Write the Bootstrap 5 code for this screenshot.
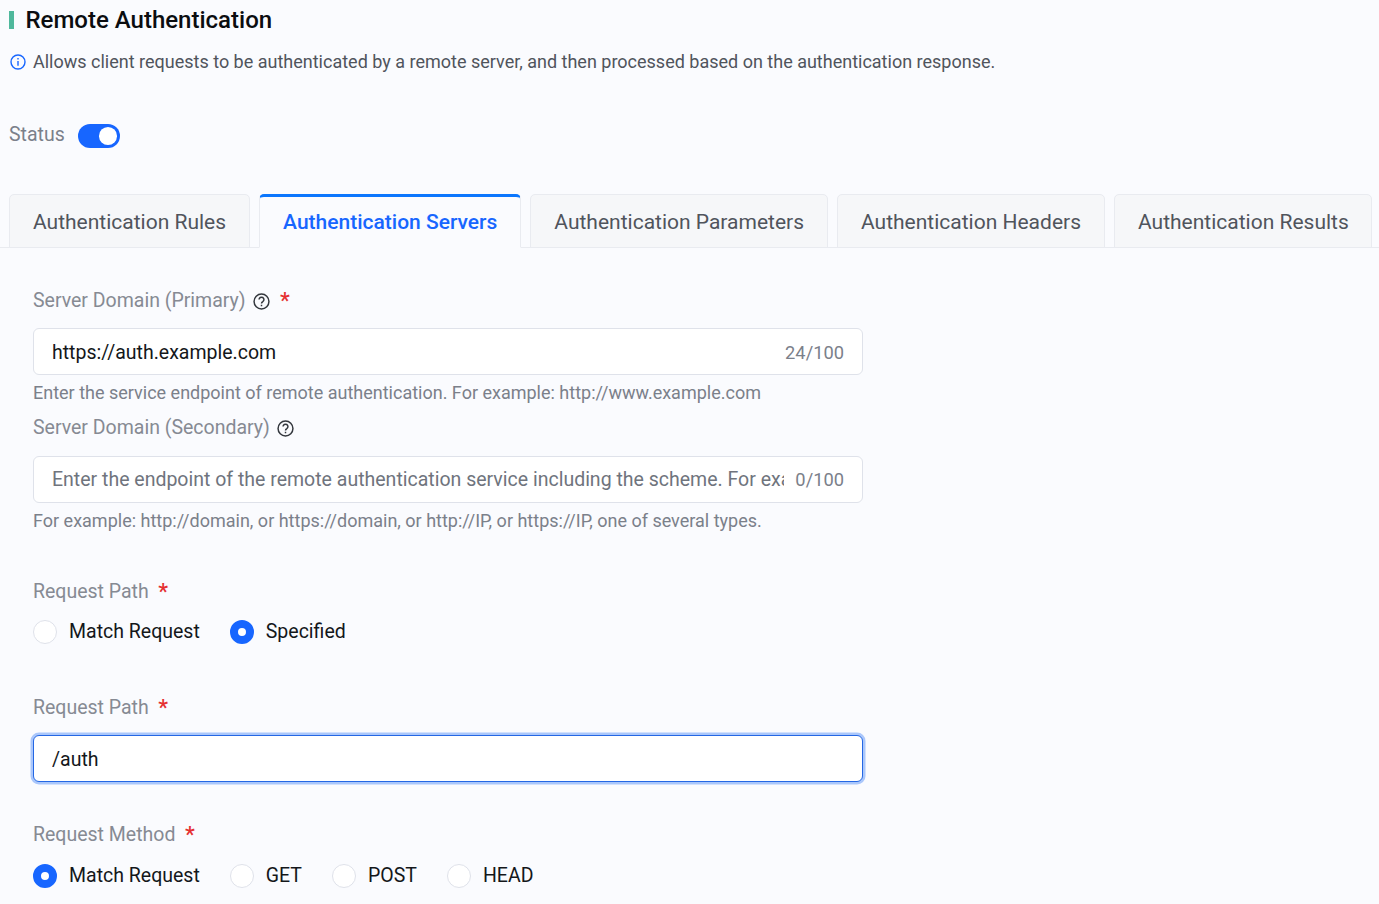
<!doctype html>
<html lang="en">

<head>
  <meta charset="utf-8">
  <meta name="viewport" content="width=device-width, initial-scale=1">
  <title>Remote Authentication</title>
  <link href="https://cdn.jsdelivr.net/npm/bootstrap@5.3.0/dist/css/bootstrap.min.css" rel="stylesheet">
  <style>
    html, body {
      height: 904px;
      overflow: hidden;
    }

    body {
      background-color: #fafbfe;
      font-family: Roboto, "Liberation Sans", sans-serif;
      font-size: 19.5px;
      color: #1f2329;
    }

    .page-wrap {
      padding: 6px 7px 0 9px;
    }

    .title-row {
      height: 28px;
      font-size: 24px;
      font-weight: 500;
      line-height: 28px;
      color: #0b0d10;
    }

    .title-mark {
      width: 5px;
      height: 18px;
      background-color: #4fb89c;
      margin-right: 11.5px;
    }

    .desc-row {
      margin-top: 14px;
      height: 28px;
      line-height: 28px;
      font-size: 18px;
      color: #50545c;
    }

    .desc-row svg {
      margin: 0 7px 0 1px;
    }

    .status-row {
      margin-top: 46px;
      height: 28px;
      color: #7b808a;
      line-height: 26px;
    }

    .status-toggle {
      width: 42px;
      height: 24px;
      border-radius: 12px;
      background-color: #1766ff;
      margin: 2px 0 0 13px;
      padding: 3px 2.5px 3px 21px;
    }

    .status-toggle span {
      width: 18.5px;
      height: 18px;
      border-radius: 50%;
      background-color: #fff;
      display: block;
    }

    .tabs-bar {
      margin: 44px -7px 0 -9px;
      padding: 0 7px 0 9px;
      gap: 9px;
      flex-wrap: nowrap;
      border-bottom: 1px solid #e9ebf0;
      height: 54px;
    }

    .tabs-bar .nav-link {
      font-size: 21px;
      line-height: 28px;
      padding: 13px 23px 0;
      height: 54px;
      color: #50545c;
      background-color: #f6f7f9;
      border: 1px solid #e9ebf0;
      border-radius: 5px 5px 0 0;
      margin-bottom: -1px;
      white-space: nowrap;
    }

    .tabs-bar .nav-item:last-child .nav-link {
      padding-right: 22px;
    }

    .tabs-bar .nav-link.active {
      color: #1766ff;
      font-weight: 500;
      background-color: #fafbfe;
      border-color: #e9ebf0;
      border-top: 3px solid #0b76fd;
      border-bottom-color: #fafbfe;
      padding-top: 11px;
    }

    .form-area {
      padding: 0 0 0 24px;
      width: 854px;
    }

    .field-label {
      height: 28px;
      line-height: 28px;
      color: #868a93;
      margin: 0;
    }

    .field-label svg {
      margin: 0 1px 0 7px;
    }

    .gap-first {
      margin-top: 39px;
    }

    .gap-second {
      margin-top: 7px;
    }

    .gap-third {
      margin-top: 43px;
    }

    .gap-fourth {
      margin-top: 48px;
    }

    .gap-fifth {
      margin-top: 39px;
    }

    .req {
      color: #e53030;
      margin-left: 9.5px;
      font-size: 22px;
      font-weight: 500;
    }

    .text-box {
      height: 47px;
      margin-top: 14px;
      background-color: #fff;
      border: 1px solid #dfe2ea;
      border-radius: 6px;
      padding: 0 18px;
    }

    .box-first {
      margin-top: 13px;
      padding-top: 2px;
    }

    .text-box input {
      border: 0;
      outline: 0;
      padding: 0;
      background: transparent;
      font-size: 19.5px;
      color: #14171a;
      min-width: 0;
      flex: 1 1 auto;
    }

    .text-box input::placeholder {
      color: #6f747d;
      opacity: 1;
    }

    .text-box .counter {
      color: #7b808a;
      font-size: 18.3px;
      margin-left: 11px;
    }

    .text-box.is-focus {
      margin-top: 13px;
      padding-top: 2px;
      border: 1px solid #2467e4;
      box-shadow: 0 0 0 2.5px #aac7fb;
    }

    .hint-text {
      height: 28px;
      line-height: 28px;
      margin-top: 4px;
      font-size: 18px;
      color: #7b808a;
    }

    .radio-row {
      margin-top: 12px;
      height: 28px;
      color: #14171a;
    }

    .radio-row.row-last {
      margin-top: 13px;
    }

    .radio-item {
      margin-right: 30px;
    }

    .radio-dot {
      width: 24px;
      height: 24px;
      border-radius: 50%;
      border: 1px solid #dfe2ea;
      background-color: #fff;
      margin-right: 12px;
    }

    .radio-dot.is-on {
      border: 8px solid #1766ff;
    }
  </style>
</head>

<body>

  <div class="page-wrap">
    <div class="title-row d-flex align-items-center">
      <span class="title-mark"></span>
      <span>Remote Authentication</span>
    </div>

    <div class="desc-row d-flex align-items-center">
      <svg width="16" height="16" viewBox="0 0 16 16" fill="none" stroke="#1766ff" stroke-width="1.4">
        <circle cx="8" cy="8" r="7"></circle>
        <path d="M8 7v4.7M8 4v1.6"></path>
      </svg>
      <span>Allows client requests to be authenticated by a remote server, and then processed based on the authentication response.</span>
    </div>

    <div class="status-row d-flex align-items-start">
      <span>Status</span>
      <div class="status-toggle"><span></span></div>
    </div>

    <ul class="nav nav-tabs tabs-bar">
      <li class="nav-item"><a class="nav-link" href="#">Authentication Rules</a></li>
      <li class="nav-item"><a class="nav-link active" href="#">Authentication Servers</a></li>
      <li class="nav-item"><a class="nav-link" href="#">Authentication Parameters</a></li>
      <li class="nav-item"><a class="nav-link" href="#">Authentication Headers</a></li>
      <li class="nav-item"><a class="nav-link" href="#">Authentication Results</a></li>
    </ul>

    <div class="form-area">
      <div class="field-label gap-first d-flex align-items-center">
        <span>Server Domain (Primary)</span>
        <svg width="17" height="17" viewBox="0 0 16 16" fill="none" stroke="#33373d" stroke-width="1.4">
          <circle cx="8" cy="8" r="7"></circle>
          <path d="M5.7 6.2a2.3 2.3 0 1 1 3.5 2c-.8.4-1.2.8-1.2 1.7M8 11v1.4"></path>
        </svg>
        <span class="req">*</span>
      </div>
      <div class="text-box box-first d-flex align-items-center">
        <input type="text" value="https://auth.example.com">
        <span class="counter">24/100</span>
      </div>
      <div class="hint-text">Enter the service endpoint of remote authentication. For example: http://www.example.com</div>

      <div class="field-label gap-second d-flex align-items-center">
        <span>Server Domain (Secondary)</span>
        <svg width="17" height="17" viewBox="0 0 16 16" fill="none" stroke="#33373d" stroke-width="1.4">
          <circle cx="8" cy="8" r="7"></circle>
          <path d="M5.7 6.2a2.3 2.3 0 1 1 3.5 2c-.8.4-1.2.8-1.2 1.7M8 11v1.4"></path>
        </svg>
      </div>
      <div class="text-box d-flex align-items-center">
        <input type="text" placeholder="Enter the endpoint of the remote authentication service including the scheme. For example: https://domain">
        <span class="counter">0/100</span>
      </div>
      <div class="hint-text">For example: http://domain, or https://domain, or http://IP, or https://IP, one of several types.</div>

      <div class="field-label gap-third d-flex align-items-center">
        <span>Request Path</span>
        <span class="req">*</span>
      </div>
      <div class="radio-row d-flex align-items-center">
        <div class="radio-item d-flex align-items-center"><span class="radio-dot"></span>Match Request</div>
        <div class="radio-item d-flex align-items-center"><span class="radio-dot is-on"></span>Specified</div>
      </div>

      <div class="field-label gap-fourth d-flex align-items-center">
        <span>Request Path</span>
        <span class="req">*</span>
      </div>
      <div class="text-box is-focus d-flex align-items-center">
        <input type="text" value="/auth">
      </div>

      <div class="field-label gap-fifth d-flex align-items-center">
        <span>Request Method</span>
        <span class="req">*</span>
      </div>
      <div class="radio-row row-last d-flex align-items-center">
        <div class="radio-item d-flex align-items-center"><span class="radio-dot is-on"></span>Match Request</div>
        <div class="radio-item d-flex align-items-center"><span class="radio-dot"></span>GET</div>
        <div class="radio-item d-flex align-items-center"><span class="radio-dot"></span>POST</div>
        <div class="radio-item d-flex align-items-center"><span class="radio-dot"></span>HEAD</div>
      </div>
    </div>
  </div>

  <script src="https://cdn.jsdelivr.net/npm/bootstrap@5.3.0/dist/js/bootstrap.bundle.min.js"></script>
</body>

</html>
